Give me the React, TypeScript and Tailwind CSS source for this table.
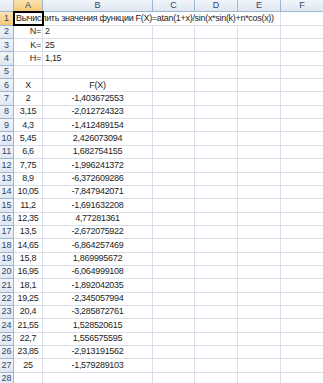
import React from 'react';

const cols = ['A', 'B', 'C', 'D', 'E', 'F'];

const data: [string, string][] = [
  ['2', '-1,403672553'],
  ['3,15', '-2,012724323'],
  ['4,3', '-1,412489154'],
  ['5,45', '2,426073094'],
  ['6,6', '1,682754155'],
  ['7,75', '-1,996241372'],
  ['8,9', '-6,372609286'],
  ['10,05', '-7,847942071'],
  ['11,2', '-1,691632208'],
  ['12,35', '4,77281361'],
  ['13,5', '-2,672075922'],
  ['14,65', '-6,864257469'],
  ['15,8', '1,869995672'],
  ['16,95', '-6,064999108'],
  ['18,1', '-1,892042035'],
  ['19,25', '-2,345057994'],
  ['20,4', '-3,285872761'],
  ['21,55', '1,528520615'],
  ['22,7', '1,556575595'],
  ['23,85', '-2,913191562'],
  ['25', '-1,579289103'],
];

const cell = 'border-r border-b border-[#dae0ea] flex items-center whitespace-nowrap';
const headBg = 'bg-gradient-to-b from-[#f1f5fa] to-[#dfe7f1]';
const selBg = 'bg-gradient-to-b from-[#fbe3b0] to-[#f4c873]';

const RowHead = ({ n, active }: { n: number; active?: boolean }) => (
  <div
    className={
      'flex items-center justify-center border-r border-b border-[#9eb6ce] text-[9px] tracking-normal text-[#30476a] ' +
      (active ? selBg : headBg)
    }
  >
    {n}
  </div>
);

const Empty = ({ n }: { n: number }) => (
  <>
    {Array.from({ length: n }).map((_, i) => (
      <div key={i} className={cell} />
    ))}
  </>
);

export default function App() {
  const rows: React.ReactNode[] = [];

  // row 1: title overflows across B..E
  rows.push(
    <React.Fragment key="r1">
      <RowHead n={1} active />
      <div className="relative flex items-center whitespace-nowrap border-b border-[#dae0ea] pl-[2px]">
        <span>Вычислить значения функции F(X)=atan(1+x)/sin(x*sin(k)+n*cos(x))</span>
        <div className="absolute -left-px -top-px right-[-1px] bottom-[-1px] border-2 border-black" />
      </div>
      <div className="border-b border-[#dae0ea]" />
      <div className="border-b border-[#dae0ea]" />
      <div className="border-b border-[#dae0ea]" />
      <div className="border-r border-b border-[#dae0ea]" />
      <div className={cell} />
    </React.Fragment>
  );

  const params: [string, string][] = [
    ['N=', '2'],
    ['K=', '25'],
    ['H=', '1,15'],
  ];
  params.forEach(([l, v], i) => {
    rows.push(
      <React.Fragment key={'p' + i}>
        <RowHead n={i + 2} />
        <div className={cell + ' justify-end pr-[1px]'}>{l}</div>
        <div className={cell + ' pl-[2px]'}>{v}</div>
        <Empty n={4} />
      </React.Fragment>
    );
  });

  rows.push(
    <React.Fragment key="r5">
      <RowHead n={5} />
      <Empty n={6} />
    </React.Fragment>
  );

  rows.push(
    <React.Fragment key="r6">
      <RowHead n={6} />
      <div className={cell + ' justify-center'}>X</div>
      <div className={cell + ' justify-center'}>F(X)</div>
      <Empty n={4} />
    </React.Fragment>
  );

  data.forEach(([x, f], i) => {
    rows.push(
      <React.Fragment key={'d' + i}>
        <RowHead n={i + 7} />
        <div className={cell + ' justify-center'}>{x}</div>
        <div className={cell + ' justify-center'}>{f}</div>
        <Empty n={4} />
      </React.Fragment>
    );
  });

  rows.push(
    <React.Fragment key="r28">
      <RowHead n={28} />
      <Empty n={6} />
    </React.Fragment>
  );

  return (
    <div
      className="w-[323px] h-[383px] overflow-hidden bg-white text-[9px] tracking-[-0.3px] text-[#1e1e1e]"
      style={{ fontFamily: '"Liberation Sans", Arial, sans-serif' }}
    >
      <div className="grid grid-cols-[14px_29px_110px_42px_43px_43px_43px] grid-rows-[12.4px] auto-rows-[13.35px]">
        <div className={'border-r border-b border-[#9eb6ce] ' + headBg} />
        {cols.map((c) => (
          <div
            key={c}
            className={
              'flex items-center justify-center border-r border-b border-[#9eb6ce] text-[9px] tracking-normal text-[#30476a] ' +
              (c === 'A' ? selBg : headBg)
            }
          >
            {c}
          </div>
        ))}
        {rows}
      </div>
    </div>
  );
}
